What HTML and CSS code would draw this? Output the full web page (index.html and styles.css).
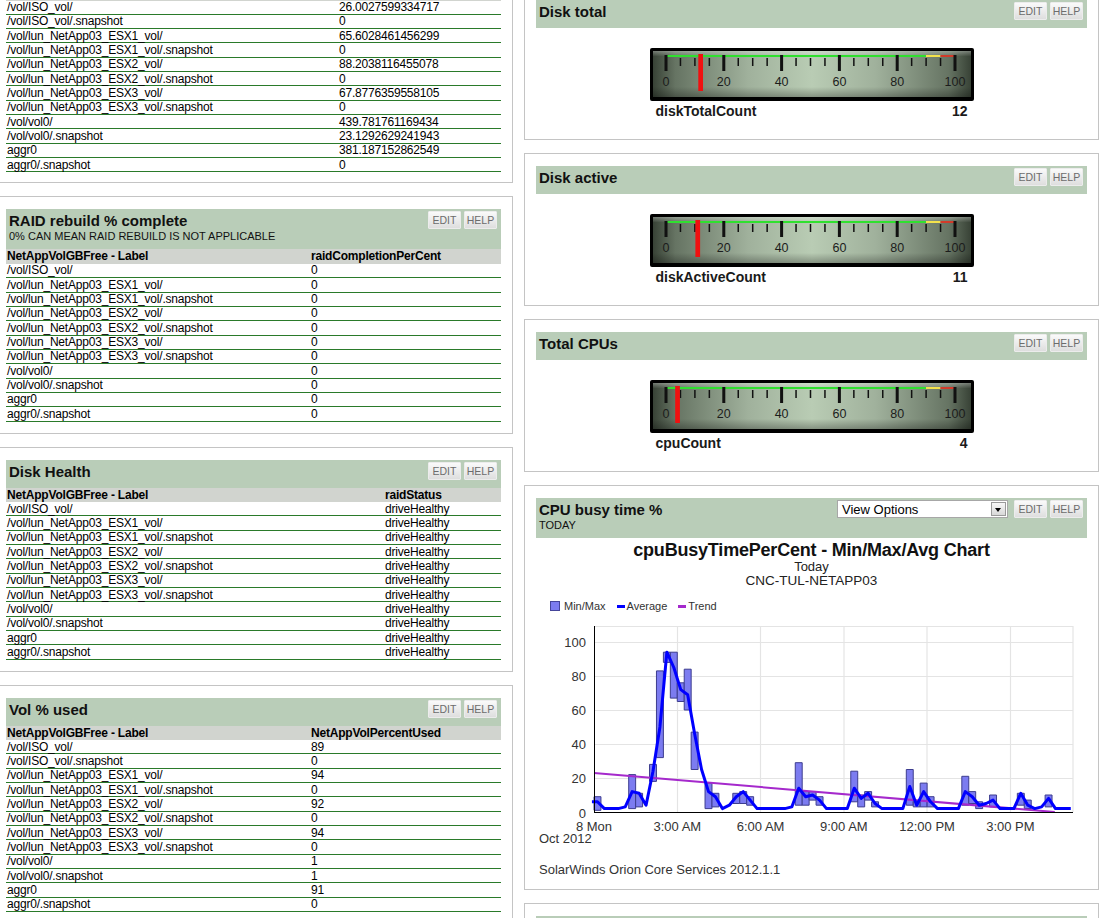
FILE: index.html
```html
<!DOCTYPE html>
<html>
<head>
<meta charset="utf-8">
<title>NetApp Resources</title>
<link rel="stylesheet" href="styles.css">
</head>
<body>
<div class="page">
  <div class="col col-left">
    <section class="panel">
      <div class="res-head">
        <div class="res-titles"><h2 class="res-title">Vol GB free</h2></div>
        <div class="res-tools"><span class="btn">EDIT</span><span class="btn">HELP</span></div>
      </div>
      <table class="grid t-gbfree">
        <tr><th>NetAppVolGBFree - Label</th><th>NetAppVolGBFree</th></tr>
        <tr><td>/vol/ISO_vol/</td><td>26.0027599334717</td></tr>
        <tr><td>/vol/ISO_vol/.snapshot</td><td>0</td></tr>
        <tr><td>/vol/lun_NetApp03_ESX1_vol/</td><td>65.6028461456299</td></tr>
        <tr><td>/vol/lun_NetApp03_ESX1_vol/.snapshot</td><td>0</td></tr>
        <tr><td>/vol/lun_NetApp03_ESX2_vol/</td><td>88.2038116455078</td></tr>
        <tr><td>/vol/lun_NetApp03_ESX2_vol/.snapshot</td><td>0</td></tr>
        <tr><td>/vol/lun_NetApp03_ESX3_vol/</td><td>67.8776359558105</td></tr>
        <tr><td>/vol/lun_NetApp03_ESX3_vol/.snapshot</td><td>0</td></tr>
        <tr><td>/vol/vol0/</td><td>439.781761169434</td></tr>
        <tr><td>/vol/vol0/.snapshot</td><td>23.1292629241943</td></tr>
        <tr><td>aggr0</td><td>381.187152862549</td></tr>
        <tr><td>aggr0/.snapshot</td><td>0</td></tr>
      </table>
    </section>

    <section class="panel">
      <div class="res-head">
        <div class="res-titles">
          <h2 class="res-title">RAID rebuild % complete</h2>
          <div class="res-sub">0% CAN MEAN RAID REBUILD IS NOT APPLICABLE</div>
        </div>
        <div class="res-tools"><span class="btn">EDIT</span><span class="btn">HELP</span></div>
      </div>
      <table class="grid t-raid">
        <tr><th>NetAppVolGBFree - Label</th><th>raidCompletionPerCent</th></tr>
        <tr><td>/vol/ISO_vol/</td><td>0</td></tr>
        <tr><td>/vol/lun_NetApp03_ESX1_vol/</td><td>0</td></tr>
        <tr><td>/vol/lun_NetApp03_ESX1_vol/.snapshot</td><td>0</td></tr>
        <tr><td>/vol/lun_NetApp03_ESX2_vol/</td><td>0</td></tr>
        <tr><td>/vol/lun_NetApp03_ESX2_vol/.snapshot</td><td>0</td></tr>
        <tr><td>/vol/lun_NetApp03_ESX3_vol/</td><td>0</td></tr>
        <tr><td>/vol/lun_NetApp03_ESX3_vol/.snapshot</td><td>0</td></tr>
        <tr><td>/vol/vol0/</td><td>0</td></tr>
        <tr><td>/vol/vol0/.snapshot</td><td>0</td></tr>
        <tr><td>aggr0</td><td>0</td></tr>
        <tr><td>aggr0/.snapshot</td><td>0</td></tr>
      </table>
    </section>

    <section class="panel">
      <div class="res-head">
        <div class="res-titles"><h2 class="res-title">Disk Health</h2></div>
        <div class="res-tools"><span class="btn">EDIT</span><span class="btn">HELP</span></div>
      </div>
      <table class="grid t-health">
        <tr><th>NetAppVolGBFree - Label</th><th>raidStatus</th></tr>
        <tr><td>/vol/ISO_vol/</td><td>driveHealthy</td></tr>
        <tr><td>/vol/lun_NetApp03_ESX1_vol/</td><td>driveHealthy</td></tr>
        <tr><td>/vol/lun_NetApp03_ESX1_vol/.snapshot</td><td>driveHealthy</td></tr>
        <tr><td>/vol/lun_NetApp03_ESX2_vol/</td><td>driveHealthy</td></tr>
        <tr><td>/vol/lun_NetApp03_ESX2_vol/.snapshot</td><td>driveHealthy</td></tr>
        <tr><td>/vol/lun_NetApp03_ESX3_vol/</td><td>driveHealthy</td></tr>
        <tr><td>/vol/lun_NetApp03_ESX3_vol/.snapshot</td><td>driveHealthy</td></tr>
        <tr><td>/vol/vol0/</td><td>driveHealthy</td></tr>
        <tr><td>/vol/vol0/.snapshot</td><td>driveHealthy</td></tr>
        <tr><td>aggr0</td><td>driveHealthy</td></tr>
        <tr><td>aggr0/.snapshot</td><td>driveHealthy</td></tr>
      </table>
    </section>

    <section class="panel">
      <div class="res-head">
        <div class="res-titles"><h2 class="res-title">Vol % used</h2></div>
        <div class="res-tools"><span class="btn">EDIT</span><span class="btn">HELP</span></div>
      </div>
      <table class="grid t-vol">
        <tr><th>NetAppVolGBFree - Label</th><th>NetAppVolPercentUsed</th></tr>
        <tr><td>/vol/ISO_vol/</td><td>89</td></tr>
        <tr><td>/vol/ISO_vol/.snapshot</td><td>0</td></tr>
        <tr><td>/vol/lun_NetApp03_ESX1_vol/</td><td>94</td></tr>
        <tr><td>/vol/lun_NetApp03_ESX1_vol/.snapshot</td><td>0</td></tr>
        <tr><td>/vol/lun_NetApp03_ESX2_vol/</td><td>92</td></tr>
        <tr><td>/vol/lun_NetApp03_ESX2_vol/.snapshot</td><td>0</td></tr>
        <tr><td>/vol/lun_NetApp03_ESX3_vol/</td><td>94</td></tr>
        <tr><td>/vol/lun_NetApp03_ESX3_vol/.snapshot</td><td>0</td></tr>
        <tr><td>/vol/vol0/</td><td>1</td></tr>
        <tr><td>/vol/vol0/.snapshot</td><td>1</td></tr>
        <tr><td>aggr0</td><td>91</td></tr>
        <tr><td>aggr0/.snapshot</td><td>0</td></tr>
      </table>
    </section>
  </div>

  <div class="col col-right">
    <section class="panel">
      <div class="res-head">
        <div class="res-titles"><h2 class="res-title">Disk total</h2></div>
        <div class="res-tools"><span class="btn">EDIT</span><span class="btn">HELP</span></div>
      </div>
      <div class="gauge-body">
        <svg class="gauge" width="324" height="53" viewBox="0 0 324 53">
          <defs>
            <linearGradient id="gface" x1="0" y1="0" x2="1" y2="0">
              <stop offset="0" stop-color="#384236"/>
              <stop offset="0.07" stop-color="#667463"/>
              <stop offset="0.3" stop-color="#a0b19c"/>
              <stop offset="0.5" stop-color="#b9ccb4"/>
              <stop offset="0.7" stop-color="#a0b19c"/>
              <stop offset="0.93" stop-color="#667463"/>
              <stop offset="1" stop-color="#384236"/>
            </linearGradient>
            <linearGradient id="gshade" x1="0" y1="0" x2="0" y2="1">
              <stop offset="0" stop-color="#ffffff" stop-opacity="0.3"/>
              <stop offset="0.12" stop-color="#ffffff" stop-opacity="0"/>
              <stop offset="0.78" stop-color="#000000" stop-opacity="0"/>
              <stop offset="1" stop-color="#000000" stop-opacity="0.28"/>
            </linearGradient>
          </defs>
          <rect x="0" y="0" width="324" height="53" rx="2" class="g-frame"/>
          <rect x="3" y="3" width="318" height="46" fill="url(#gface)"/>
          <rect x="3" y="3" width="318" height="46" fill="url(#gshade)"/>
          <rect x="16" y="7" width="260" height="2" class="g-green"/>
          <rect x="276" y="7" width="14.5" height="2" class="g-yellow"/>
          <rect x="290.5" y="7" width="14.5" height="2" class="g-red"/>
          <g class="g-ticks">
            <rect x="14.5" y="7" width="3" height="16"/><rect x="72.3" y="7" width="3" height="16"/><rect x="130.1" y="7" width="3" height="16"/><rect x="187.9" y="7" width="3" height="16"/><rect x="245.7" y="7" width="3" height="16"/><rect x="303.5" y="7" width="3" height="16"/>
            <rect x="29.7" y="10" width="1.5" height="8"/><rect x="44.15" y="10" width="1.5" height="8"/><rect x="58.6" y="10" width="1.5" height="8"/><rect x="87.5" y="10" width="1.5" height="8"/><rect x="101.95" y="10" width="1.5" height="8"/><rect x="116.4" y="10" width="1.5" height="8"/><rect x="145.3" y="10" width="1.5" height="8"/><rect x="159.75" y="10" width="1.5" height="8"/><rect x="174.2" y="10" width="1.5" height="8"/><rect x="203.1" y="10" width="1.5" height="8"/><rect x="217.55" y="10" width="1.5" height="8"/><rect x="232" y="10" width="1.5" height="8"/><rect x="260.9" y="10" width="1.5" height="8"/><rect x="275.35" y="10" width="1.5" height="8"/><rect x="289.8" y="10" width="1.5" height="8"/>
          </g>
          <g class="g-nums"><text x="16" y="38">0</text><text x="73.8" y="38">20</text><text x="131.6" y="38">40</text><text x="189.4" y="38">60</text><text x="247.2" y="38">80</text><text x="305" y="38">100</text></g>
          <rect x="48.3" y="6" width="4.7" height="37" class="g-needle"/>
        </svg>
        <div class="gauge-label"><span>diskTotalCount</span><span>12</span></div>
      </div>
    </section>

    <section class="panel">
      <div class="res-head">
        <div class="res-titles"><h2 class="res-title">Disk active</h2></div>
        <div class="res-tools"><span class="btn">EDIT</span><span class="btn">HELP</span></div>
      </div>
      <div class="gauge-body">
        <svg class="gauge" width="324" height="53" viewBox="0 0 324 53">
          <rect x="0" y="0" width="324" height="53" rx="2" class="g-frame"/>
          <rect x="3" y="3" width="318" height="46" fill="url(#gface)"/>
          <rect x="3" y="3" width="318" height="46" fill="url(#gshade)"/>
          <rect x="16" y="7" width="260" height="2" class="g-green"/>
          <rect x="276" y="7" width="14.5" height="2" class="g-yellow"/>
          <rect x="290.5" y="7" width="14.5" height="2" class="g-red"/>
          <g class="g-ticks">
            <rect x="14.5" y="7" width="3" height="16"/><rect x="72.3" y="7" width="3" height="16"/><rect x="130.1" y="7" width="3" height="16"/><rect x="187.9" y="7" width="3" height="16"/><rect x="245.7" y="7" width="3" height="16"/><rect x="303.5" y="7" width="3" height="16"/>
            <rect x="29.7" y="10" width="1.5" height="8"/><rect x="44.15" y="10" width="1.5" height="8"/><rect x="58.6" y="10" width="1.5" height="8"/><rect x="87.5" y="10" width="1.5" height="8"/><rect x="101.95" y="10" width="1.5" height="8"/><rect x="116.4" y="10" width="1.5" height="8"/><rect x="145.3" y="10" width="1.5" height="8"/><rect x="159.75" y="10" width="1.5" height="8"/><rect x="174.2" y="10" width="1.5" height="8"/><rect x="203.1" y="10" width="1.5" height="8"/><rect x="217.55" y="10" width="1.5" height="8"/><rect x="232" y="10" width="1.5" height="8"/><rect x="260.9" y="10" width="1.5" height="8"/><rect x="275.35" y="10" width="1.5" height="8"/><rect x="289.8" y="10" width="1.5" height="8"/>
          </g>
          <g class="g-nums"><text x="16" y="38">0</text><text x="73.8" y="38">20</text><text x="131.6" y="38">40</text><text x="189.4" y="38">60</text><text x="247.2" y="38">80</text><text x="305" y="38">100</text></g>
          <rect x="45.4" y="6" width="4.7" height="37" class="g-needle"/>
        </svg>
        <div class="gauge-label"><span>diskActiveCount</span><span>11</span></div>
      </div>
    </section>

    <section class="panel">
      <div class="res-head">
        <div class="res-titles"><h2 class="res-title">Total CPUs</h2></div>
        <div class="res-tools"><span class="btn">EDIT</span><span class="btn">HELP</span></div>
      </div>
      <div class="gauge-body">
        <svg class="gauge" width="324" height="53" viewBox="0 0 324 53">
          <rect x="0" y="0" width="324" height="53" rx="2" class="g-frame"/>
          <rect x="3" y="3" width="318" height="46" fill="url(#gface)"/>
          <rect x="3" y="3" width="318" height="46" fill="url(#gshade)"/>
          <rect x="16" y="7" width="260" height="2" class="g-green"/>
          <rect x="276" y="7" width="14.5" height="2" class="g-yellow"/>
          <rect x="290.5" y="7" width="14.5" height="2" class="g-red"/>
          <g class="g-ticks">
            <rect x="14.5" y="7" width="3" height="16"/><rect x="72.3" y="7" width="3" height="16"/><rect x="130.1" y="7" width="3" height="16"/><rect x="187.9" y="7" width="3" height="16"/><rect x="245.7" y="7" width="3" height="16"/><rect x="303.5" y="7" width="3" height="16"/>
            <rect x="29.7" y="10" width="1.5" height="8"/><rect x="44.15" y="10" width="1.5" height="8"/><rect x="58.6" y="10" width="1.5" height="8"/><rect x="87.5" y="10" width="1.5" height="8"/><rect x="101.95" y="10" width="1.5" height="8"/><rect x="116.4" y="10" width="1.5" height="8"/><rect x="145.3" y="10" width="1.5" height="8"/><rect x="159.75" y="10" width="1.5" height="8"/><rect x="174.2" y="10" width="1.5" height="8"/><rect x="203.1" y="10" width="1.5" height="8"/><rect x="217.55" y="10" width="1.5" height="8"/><rect x="232" y="10" width="1.5" height="8"/><rect x="260.9" y="10" width="1.5" height="8"/><rect x="275.35" y="10" width="1.5" height="8"/><rect x="289.8" y="10" width="1.5" height="8"/>
          </g>
          <g class="g-nums"><text x="16" y="38">0</text><text x="73.8" y="38">20</text><text x="131.6" y="38">40</text><text x="189.4" y="38">60</text><text x="247.2" y="38">80</text><text x="305" y="38">100</text></g>
          <rect x="25.2" y="6" width="4.7" height="37" class="g-needle"/>
        </svg>
        <div class="gauge-label"><span>cpuCount</span><span>4</span></div>
      </div>
    </section>

    <section class="panel">
      <div class="res-head">
        <div class="res-titles">
          <h2 class="res-title">CPU busy time %</h2>
          <div class="res-sub">TODAY</div>
        </div>
        <div class="res-tools">
          <div class="select"><span class="select-text">View Options</span><span class="select-arrow"></span></div>
          <span class="btn">EDIT</span><span class="btn">HELP</span>
        </div>
      </div>
      <div class="chart-body">
        <div class="chart-title">cpuBusyTimePerCent - Min/Max/Avg Chart</div>
        <div class="chart-period">Today</div>
        <div class="chart-host">CNC-TUL-NETAPP03</div>
        <div class="legend">
          <span class="lg-box"></span><span>Min/Max</span>
          <span class="lg-line lg-avg"></span><span>Average</span>
          <span class="lg-line lg-trend"></span><span>Trend</span>
        </div>
        <svg class="chart" width="551" height="230" viewBox="0 0 551 230">
          <g class="gl">
            <line x1="58" y1="10.5" x2="537" y2="10.5"/>
            <line x1="58" y1="26.5" x2="537" y2="26.5"/>
            <line x1="58" y1="60.5" x2="537" y2="60.5"/>
            <line x1="58" y1="94.5" x2="537" y2="94.5"/>
            <line x1="58" y1="128.5" x2="537" y2="128.5"/>
            <line x1="58" y1="162.5" x2="537" y2="162.5"/>
            <line x1="141.5" y1="10" x2="141.5" y2="196"/>
            <line x1="224.5" y1="10" x2="224.5" y2="196"/>
            <line x1="308" y1="10" x2="308" y2="196"/>
            <line x1="391" y1="10" x2="391" y2="196"/>
            <line x1="474.5" y1="10" x2="474.5" y2="196"/>
            <line x1="537" y1="10" x2="537" y2="196"/>
          </g>
          <g transform="translate(58 196) scale(6.94 -1.7)">
            <g class="bars">
              <rect x="0" y="1" width="1" height="8"/>
              <rect x="5" y="2" width="1" height="20"/>
              <rect x="6" y="3" width="1" height="8"/>
              <rect x="8" y="18" width="1" height="10"/>
              <rect x="9" y="32" width="1" height="51"/>
              <rect x="10" y="88" width="1" height="6"/>
              <rect x="11" y="67" width="1" height="27"/>
              <rect x="12" y="65" width="1" height="11"/>
              <rect x="13" y="60" width="1" height="24"/>
              <rect x="14" y="25" width="1" height="22"/>
              <rect x="16" y="2" width="1" height="15"/>
              <rect x="17" y="3" width="1" height="8"/>
              <rect x="20" y="5" width="1" height="6"/>
              <rect x="21" y="5" width="1" height="7"/>
              <rect x="22" y="4" width="1" height="5"/>
              <rect x="29" y="4" width="1" height="25"/>
              <rect x="30" y="4" width="1" height="8"/>
              <rect x="31" y="7" width="1" height="5"/>
              <rect x="32" y="4" width="1" height="5"/>
              <rect x="37" y="6" width="1" height="18"/>
              <rect x="38" y="3" width="1" height="7"/>
              <rect x="39" y="7" width="1" height="5"/>
              <rect x="40" y="3" width="1" height="3"/>
              <rect x="45" y="4" width="1" height="21"/>
              <rect x="46" y="3" width="1" height="3"/>
              <rect x="47" y="3" width="1" height="14"/>
              <rect x="48" y="3" width="1" height="6"/>
              <rect x="53" y="4" width="1" height="17"/>
              <rect x="54" y="5" width="1" height="7"/>
              <rect x="55" y="2" width="1" height="4"/>
              <rect x="57" y="3" width="1" height="7"/>
              <rect x="61" y="4" width="1" height="7"/>
              <rect x="62" y="2" width="1" height="5"/>
              <rect x="65" y="3" width="1" height="7"/>
            </g>
            <line class="trend" x1="0" y1="23" x2="66.4" y2="0"/>
            <polyline class="avg" points="-0.3,6 0.5,6 1.5,2 2.5,2 3.5,2 4.5,3 5.5,12 6.5,11 7.5,4 8.5,24 9.5,50 10.5,94 11.5,85 12.5,72 13.5,69 14.5,46 15.5,25 16.5,12 17.5,9 18.5,2 19.5,4 20.5,9 21.5,12 22.5,7 23.5,2 24.5,2 25.5,2 26.5,2 27.5,2 28.5,3 29.5,14 30.5,9 31.5,10 32.5,7 33.5,2 34.5,2 35.5,2 36.5,2 37.5,14 38.5,8 39.5,11 40.5,5 41.5,2 42.5,2 43.5,2 44.5,2 45.5,15 46.5,4 47.5,12 48.5,6 49.5,2 50.5,2 51.5,2 52.5,2 53.5,12 54.5,9 55.5,4 56.5,5 57.5,7 58.5,2 59.5,2 60.5,2 61.5,11 62.5,4 63.5,2 64.5,3 65.5,8 66.5,2 67.5,2 68.7,2"/>
          </g>
          <line class="axis" x1="58.5" y1="10" x2="58.5" y2="197"/>
          <line class="axis" x1="58" y1="196.5" x2="537" y2="196.5"/>
          <g class="yl">
            <text x="50" y="30.5">100</text>
            <text x="50" y="64.5">80</text>
            <text x="50" y="98.5">60</text>
            <text x="50" y="132.5">40</text>
            <text x="50" y="166.5">20</text>
            <text x="50" y="201.5">0</text>
          </g>
          <g class="xl">
            <text x="58" y="214.5">8 Mon</text>
            <text x="141.3" y="214.5">3:00 AM</text>
            <text x="224.6" y="214.5">6:00 AM</text>
            <text x="307.8" y="214.5">9:00 AM</text>
            <text x="391.1" y="214.5">12:00 PM</text>
            <text x="474.4" y="214.5">3:00 PM</text>
          </g>
          <text class="xdate" x="3" y="226.5">Oct 2012</text>
        </svg>
        <div class="chart-foot">SolarWinds Orion Core Services 2012.1.1</div>
      </div>
    </section>

    <section class="panel">
      <div class="res-head">
        <div class="res-titles"><h2 class="res-title">CPU load</h2></div>
        <div class="res-tools"><span class="btn">EDIT</span><span class="btn">HELP</span></div>
      </div>
      <div class="gauge-body"></div>
    </section>
  </div>
</div>
</body>
</html>
```

FILE: styles.css
```css
* { box-sizing: border-box; }
html, body { margin: 0; padding: 0; overflow: hidden; height: 100%; background: #fff; }
body { font-family: "Liberation Sans", Arial, sans-serif; color: #000; }

.page { display: flex; align-items: flex-start; gap: 11px; }
.col { display: flex; flex-direction: column; gap: 13px; }
.col-left { width: 519px; margin-left: -6px; margin-top: -55px; flex: none; }
.col-right { width: 575px; margin-top: -13px; flex: none; }

.panel { border: 1px solid #c4c4c4; padding: 12px 11px 11px; background: #fff; }
.col-left .panel:first-child { padding-bottom: 10px; }
.col-right .panel { padding-bottom: 12px; }

.res-head {
  display: flex; justify-content: space-between; align-items: flex-start;
  background: #b9cdb8; padding: 3px 4px 6px 3px; min-height: 28px;
}
.res-title { margin: 0; font-size: 15px; line-height: 18px; font-weight: bold; color: #111; }
.res-sub { font-size: 11px; line-height: 13px; color: #111; }
.res-tools { display: flex; align-items: center; gap: 3px; margin-top: -1px; }
.btn {
  width: 33px; height: 18px; display: flex; align-items: center; justify-content: center;
  font-size: 10.5px; color: #6c6c6c; background: linear-gradient(#fafafa, #dedede);
  border: 1px solid #ececec; border-radius: 1px;
}

.select {
  width: 171px; height: 18px; margin-right: 3px; display: flex; align-items: center; justify-content: space-between;
  background: #fff; border: 1px solid #a7a7a7; padding-left: 4px;
}
.select-text { font-size: 13px; color: #000; }
.select-arrow {
  width: 15px; height: 14px; margin-right: 1px; border: 1px solid #9a9a9a;
  background: linear-gradient(#f6f6f6, #d8d8d8); position: relative;
}
.select-arrow::after {
  content: ""; position: absolute; left: 3px; top: 5px;
  border-left: 3.5px solid transparent; border-right: 3.5px solid transparent; border-top: 4px solid #000;
}

.grid { width: 100%; border-collapse: separate; border-spacing: 0; font-size: 12px; letter-spacing: -0.2px; }
.grid th { background: #d1d4cf; text-align: left; font-weight: bold; line-height: 14.5px; padding: 0 0 0 1px; }
.grid td { line-height: 12.83px; padding: 0.5px 0 0 1px; border-bottom: 1px solid #2a7a2a; white-space: nowrap; }
.t-gbfree th:first-child { width: 332px; }
.t-raid th:first-child { width: 304px; }
.t-health th:first-child { width: 378px; }
.t-vol th:first-child { width: 304px; }

.gauge-body { padding: 20px 0 7px; display: flex; flex-direction: column; align-items: center; }
.gauge { display: block; }
.g-frame { fill: #000; }
.g-green { fill: #2fe02f; }
.g-yellow { fill: #f3e24c; }
.g-red { fill: #d23a2a; }
.g-ticks rect { fill: #111; }
.g-needle { fill: #f01010; }
.g-nums text { font-family: "Liberation Sans", Arial, sans-serif; font-size: 12.5px; fill: #1c1c1c; text-anchor: middle; }
.gauge-label {
  width: 312px; margin-top: 2px; display: flex; justify-content: space-between;
  font-size: 14px; line-height: 17px; font-weight: bold; color: #1a1a1a;
}

.chart-body { display: flex; flex-direction: column; }
.chart-title { margin-top: 2px; text-align: center; font-size: 18px; line-height: 20px; font-weight: bold; color: #111; letter-spacing: -0.2px; }
.chart-period { text-align: center; font-size: 13px; line-height: 14px; color: #222; }
.chart-host { text-align: center; font-size: 13.5px; line-height: 14px; color: #222; }
.legend { margin: 12px 0 0 14px; height: 12px; display: flex; align-items: center; font-size: 11px; color: #333; }
.lg-box { width: 10px; height: 10px; background: #7c7cf0; border: 1px solid #45459a; margin-right: 4px; }
.lg-line { width: 8px; height: 3px; margin: 0 2px 0 11px; }
.lg-avg { background: #0000ff; }
.lg-trend { background: #a529cc; }

.chart { display: block; margin-top: 4px; }
.chart text { font-family: "Liberation Sans", Arial, sans-serif; font-size: 13px; fill: #333; }
.chart .yl text { text-anchor: end; }
.chart .xl text { text-anchor: middle; }
.gl line { stroke: #e4e4e4; stroke-width: 1.2; }
.axis { stroke: #000; stroke-width: 1; }
.bars rect { fill: #7c7cf0; stroke: #3d3d8f; stroke-width: 1; vector-effect: non-scaling-stroke; }
.trend { stroke: #a529cc; stroke-width: 2; vector-effect: non-scaling-stroke; }
.avg { fill: none; stroke: #0000ff; stroke-width: 3; stroke-linejoin: round; vector-effect: non-scaling-stroke; }
.chart-foot { margin-top: 17px; font-size: 13px; line-height: 14px; color: #333; padding-left: 3px; }
```
